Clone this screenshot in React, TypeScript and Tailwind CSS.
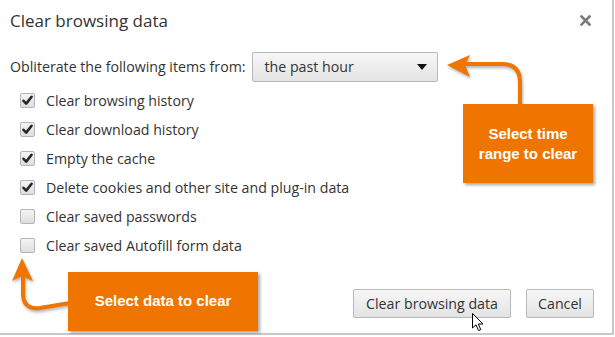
import React from "react";

const items: { label: string; checked: boolean }[] = [
  { label: "Clear browsing history", checked: true },
  { label: "Clear download history", checked: true },
  { label: "Empty the cache", checked: true },
  { label: "Delete cookies and other site and plug-in data", checked: true },
  { label: "Clear saved passwords", checked: false },
  { label: "Clear saved Autofill form data", checked: false },
];

function Checkbox({ checked }: { checked: boolean }) {
  return (
    <div className="w-[15px] h-[15px] rounded-[2px] border border-[#b4b4b4] bg-gradient-to-b from-[#f4f4f4] to-[#dedede] flex items-center justify-center">
      {checked && (
        <svg width="13" height="13" viewBox="0 0 13 13">
          <path d="M2.5 6.8 L5.2 9.6 L10.6 2.8" fill="none" stroke="#262626" strokeWidth="2.6" strokeLinecap="round" strokeLinejoin="round" />
        </svg>
      )}
    </div>
  );
}

export default function App() {
  return (
    <div className="relative w-[615px] h-[337px] bg-white overflow-hidden">
      <div className="w-[614px] h-[335px] border-r-2 border-b-2 border-[#c8c8c8] flex flex-col font-['Open_Sans',sans-serif] text-[#333]">
        <div className="h-[40px] pl-[10px] pr-[21px] flex items-center justify-between">
          <span className="text-[17px] leading-none">Clear browsing data</span>
          <svg width="11" height="11" viewBox="0 0 11 11">
            <path d="M1.5 1.5 L9.5 9.5 M9.5 1.5 L1.5 9.5" stroke="#7a7a7a" strokeWidth="2.6" strokeLinecap="square" />
          </svg>
        </div>
        <div className="mt-[12px] h-[30px] pl-[10px] flex items-center">
          <span className="text-[14.2px] whitespace-nowrap">Obliterate the following items from:</span>
          <div className="ml-[6px] w-[186px] h-[30px] rounded-[2px] border border-[#b9b9b9] bg-gradient-to-b from-[#f7f7f7] to-[#e4e4e4] flex items-center justify-between pl-[12px] pr-[10px]">
            <span className="text-[14.2px]">the past hour</span>
            <svg width="10" height="6" viewBox="0 0 10 6">
              <path d="M0 0 L10 0 L5 6 Z" fill="#111" />
            </svg>
          </div>
        </div>
        <div className="mt-[4px] flex flex-col pl-[20px]">
          {items.map((it) => (
            <div key={it.label} className="h-[29px] flex items-center gap-[11px]">
              <Checkbox checked={it.checked} />
              <span className="text-[14.2px] whitespace-nowrap">{it.label}</span>
            </div>
          ))}
        </div>
        <div className="mt-auto mb-[15px] pr-[18px] flex justify-end gap-[15px]">
          <button className="w-[158px] h-[29px] rounded-[2px] border border-[#b9b9b9] bg-gradient-to-b from-[#f7f7f7] to-[#e3e3e3] text-[14.2px] text-[#333]">
            Clear browsing data
          </button>
          <button className="w-[68px] h-[29px] rounded-[2px] border border-[#b9b9b9] bg-gradient-to-b from-[#f7f7f7] to-[#e3e3e3] text-[14.2px] text-[#333]">
            Cancel
          </button>
        </div>
      </div>

      <svg className="absolute left-0 top-0 pointer-events-none drop-shadow-[1px_2px_1.5px_rgba(0,0,0,0.3)]" width="615" height="337" viewBox="0 0 615 337">
        <path d="M520 106 L520 82 Q520 64 502 64 L464 64" fill="none" stroke="#ef7400" strokeWidth="4" />
        <polygon points="447,65 470,55 465,65 470,77" fill="#ef7400" />
        <path d="M70 303 L40 308 Q24 310 23 295 L23 276" fill="none" stroke="#ef7400" strokeWidth="4" />
        <polygon points="22,258 12,281 22,276 33,281" fill="#ef7400" />
      </svg>

      <div className="absolute left-[463px] top-[104px] w-[130px] h-[79px] bg-[#ef7400] shadow-[2px_2px_3px_rgba(0,0,0,0.35)] flex items-center justify-center text-center text-white font-bold text-[15px] leading-[20px] font-['Liberation_Sans',Arial,sans-serif]">
        Select time<br />range to clear
      </div>
      <div className="absolute left-[68px] top-[272px] w-[190px] h-[59px] bg-[#ef7400] shadow-[2px_2px_3px_rgba(0,0,0,0.35)] flex items-center justify-center text-white font-bold text-[15px] font-['Liberation_Sans',Arial,sans-serif]">
        Select data to clear
      </div>

      <svg className="absolute left-[472px] top-[313px] pointer-events-none" width="13" height="19" viewBox="0 0 13 19">
        <path d="M0.5 0.5 L0.5 15 L4 11.8 L6.6 17.6 L8.8 16.6 L6.3 11 L11 11 Z" fill="#fff" stroke="#000" strokeWidth="1" strokeLinejoin="round" />
      </svg>
    </div>
  );
}
